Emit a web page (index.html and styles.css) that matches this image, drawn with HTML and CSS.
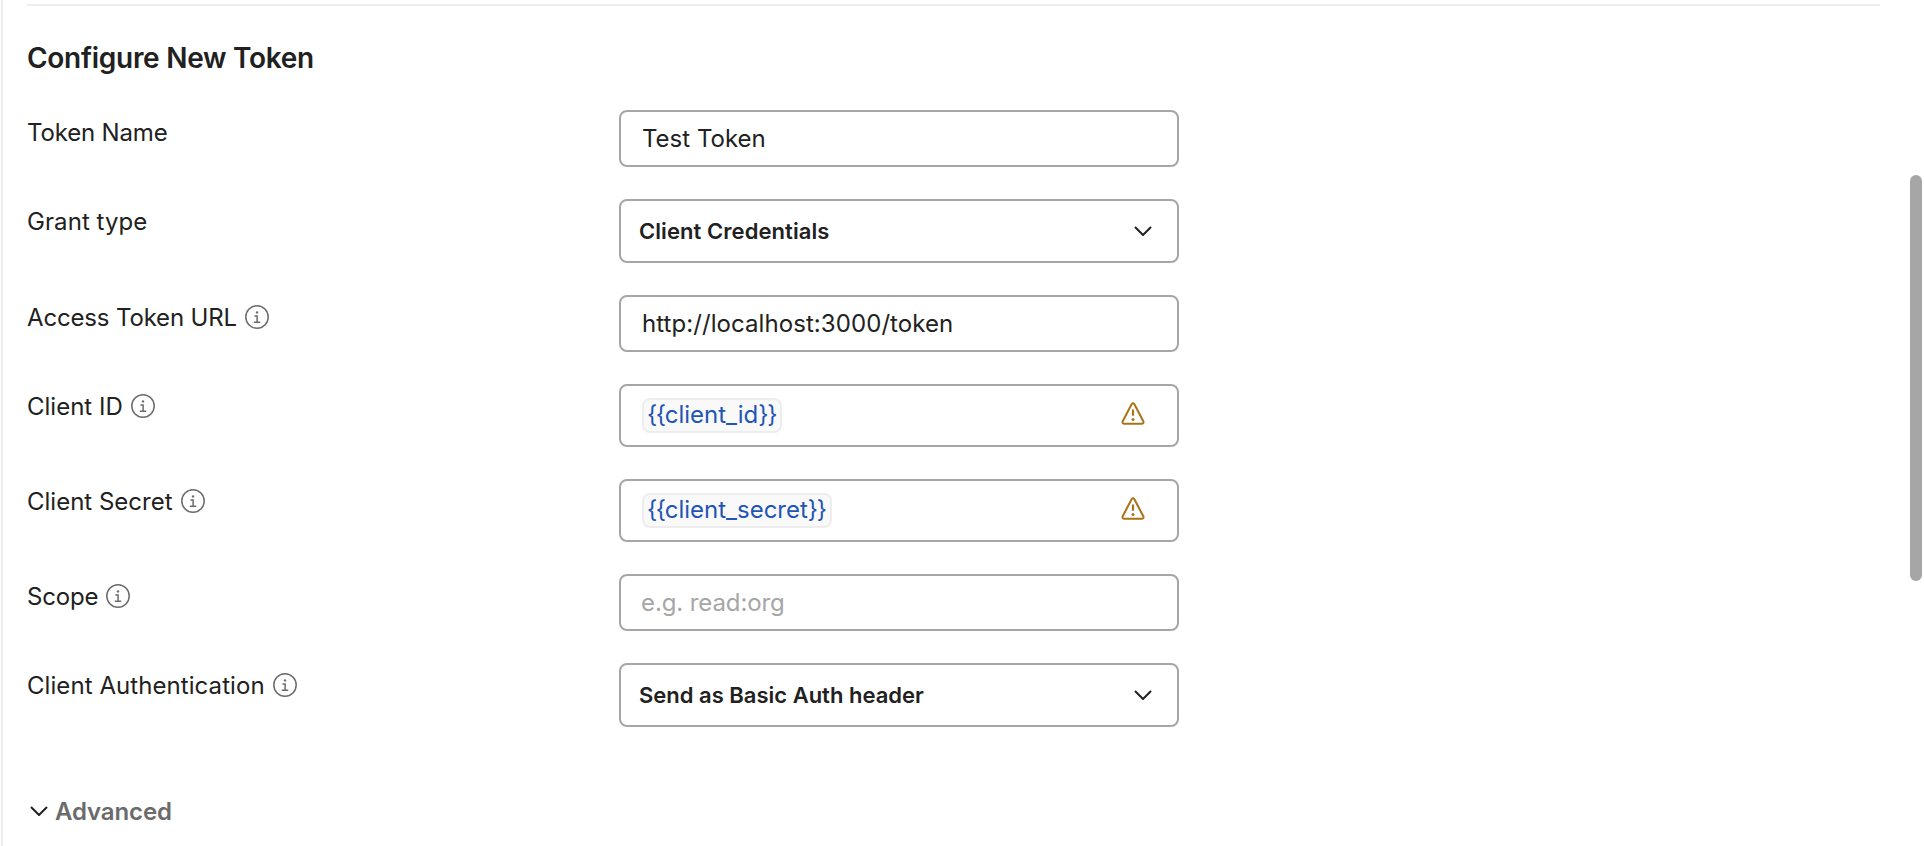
FILE: index.html
```
<!DOCTYPE html>
<html lang="en">
<head>
<meta charset="utf-8">
<title>Configure New Token</title>
<link rel="stylesheet" href="styles.css">
</head>
<body>
<svg class="sprite" aria-hidden="true">
  <symbol id="info" viewBox="0 0 24 24">
    <circle cx="12" cy="12" r="11.2" fill="none" stroke="currentColor" stroke-width="1.5"/>
    <circle cx="12" cy="7.4" r="1.2" fill="currentColor"/>
    <path d="M9.4 11h2.7v6.2M8.8 17.3h6.4" fill="none" stroke="currentColor" stroke-width="1.5"/>
  </symbol>
  <symbol id="chevron" viewBox="0 0 18 10">
    <path d="M1 1l8 8 8-8" fill="none" stroke="currentColor" stroke-width="2"/>
  </symbol>
  <symbol id="warning" viewBox="0 0 24 24">
    <path d="M10.6 2.3q1.4-2 2.8 0l8.9 16.9q.9 2.3-1.4 2.5H3.1q-2.3-.2-1.4-2.5z" fill="none" stroke="currentColor" stroke-width="2" stroke-linejoin="round"/>
    <path d="M12 7.5v6.2" fill="none" stroke="currentColor" stroke-width="2.2"/>
    <circle cx="12" cy="17.4" r="1.5" fill="currentColor"/>
  </symbol>
</svg>
<main class="panel">
  <section class="content">
    <h2 class="title">Configure New Token</h2>
    <div class="form">
      <div class="row">
        <div class="label"><span class="snug">Token Name</span></div>
        <div class="field"><span class="value">Test Token</span></div>
      </div>
      <div class="row">
        <div class="label"><span class="loose">Grant type</span></div>
        <div class="field select"><span class="choice loose">Client Credentials</span><svg class="chevron"><use href="#chevron"/></svg></div>
      </div>
      <div class="row">
        <div class="label"><span class="snug">Access Token URL</span><svg class="info"><use href="#info"/></svg></div>
        <div class="field"><span class="value loose">http://localhost:3000/token</span></div>
      </div>
      <div class="row">
        <div class="label"><span>Client ID</span><svg class="info"><use href="#info"/></svg></div>
        <div class="field variable"><span class="chip"><span class="brace">{{</span>client_id<span class="brace">}}</span></span><svg class="warning"><use href="#warning"/></svg></div>
      </div>
      <div class="row">
        <div class="label"><span>Client Secret</span><svg class="info"><use href="#info"/></svg></div>
        <div class="field variable"><span class="chip"><span class="brace">{{</span>client_secret<span class="brace">}}</span></span><svg class="warning"><use href="#warning"/></svg></div>
      </div>
      <div class="row">
        <div class="label"><span class="snug">Scope</span><svg class="info"><use href="#info"/></svg></div>
        <div class="field empty"><span class="value placeholder">e.g. read:org</span></div>
      </div>
      <div class="row">
        <div class="label"><span class="loose">Client Authentication</span><svg class="info"><use href="#info"/></svg></div>
        <div class="field select"><span class="choice">Send as Basic Auth header</span><svg class="chevron"><use href="#chevron"/></svg></div>
      </div>
    </div>
    <div class="advanced"><svg class="chevron"><use href="#chevron"/></svg><span>Advanced</span></div>
  </section>
  <div class="scrollbar"><div class="thumb"></div></div>
</main>
</body>
</html>
```

FILE: styles.css
```
* { box-sizing: border-box; }
body {
  margin: 0;
  background: #fff;
  color: #212121;
  font-family: Inter, "Liberation Sans", sans-serif;
  font-size: 24px;
}
.sprite { display: none; }
svg { display: block; flex: none; }
.panel {
  display: flex;
  justify-content: space-between;
  height: 846px;
  margin-left: 1px;
  padding: 4px 2px 0 24px;
  border-left: 2px solid #ededed;
  overflow: hidden;
}
.content {
  width: 1853px;
  border-top: 2px solid #ededed;
}
.title {
  margin: 32px 0 0;
  font-size: 28px;
  line-height: 40px;
  font-weight: 600;
  letter-spacing: -0.28px;
}
.form {
  display: grid;
  gap: 32px;
  margin-top: 32px;
}
.row {
  display: grid;
  grid-template-columns: 592px 560px;
}
.label {
  display: flex;
  align-items: center;
  gap: 8px;
  height: 44px;
  line-height: 44px;
  white-space: nowrap;
}
.label span { padding-top: 2px; }
.snug { letter-spacing: -0.16px; }
.loose { letter-spacing: 0.07px; }
.info { width: 24px; height: 24px; color: #6b6b6b; }
.field {
  display: flex;
  align-items: center;
  height: 57px;
  padding: 0 21px;
  border: 2px solid #a6a6a6;
  border-radius: 8px;
  white-space: nowrap;
}
.empty { padding: 0 20px; }
.select {
  justify-content: space-between;
  height: 64px;
  padding: 0 25px 0 18px;
}
.choice { font-size: 22px; font-weight: 600; }
.chevron { width: 18px; height: 10px; }
.variable {
  justify-content: space-between;
  height: 63px;
  padding: 0 32px 0 21px;
}
.chip {
  height: 35px;
  padding: 0 4px 0 3px;
  border: 2px solid #ededed;
  border-radius: 8px;
  background: #f9f9f9;
  color: #1f55b5;
  line-height: 30px;
}
.brace { letter-spacing: -1.4px; }
.warning { width: 24px; height: 24px; margin-bottom: 3px; color: #a87319; }
.placeholder { color: #a6a6a6; letter-spacing: -0.1px; }
.advanced {
  display: flex;
  align-items: center;
  gap: 7px;
  height: 40px;
  margin-top: 64px;
  padding-left: 3px;
  font-weight: 600;
}
.advanced span { color: #6b6b6b; letter-spacing: -0.12px; }
.scrollbar { width: 12px; padding-top: 171px; }
.thumb { height: 406px; border-radius: 6px; background: #a6a6a6; }
```
